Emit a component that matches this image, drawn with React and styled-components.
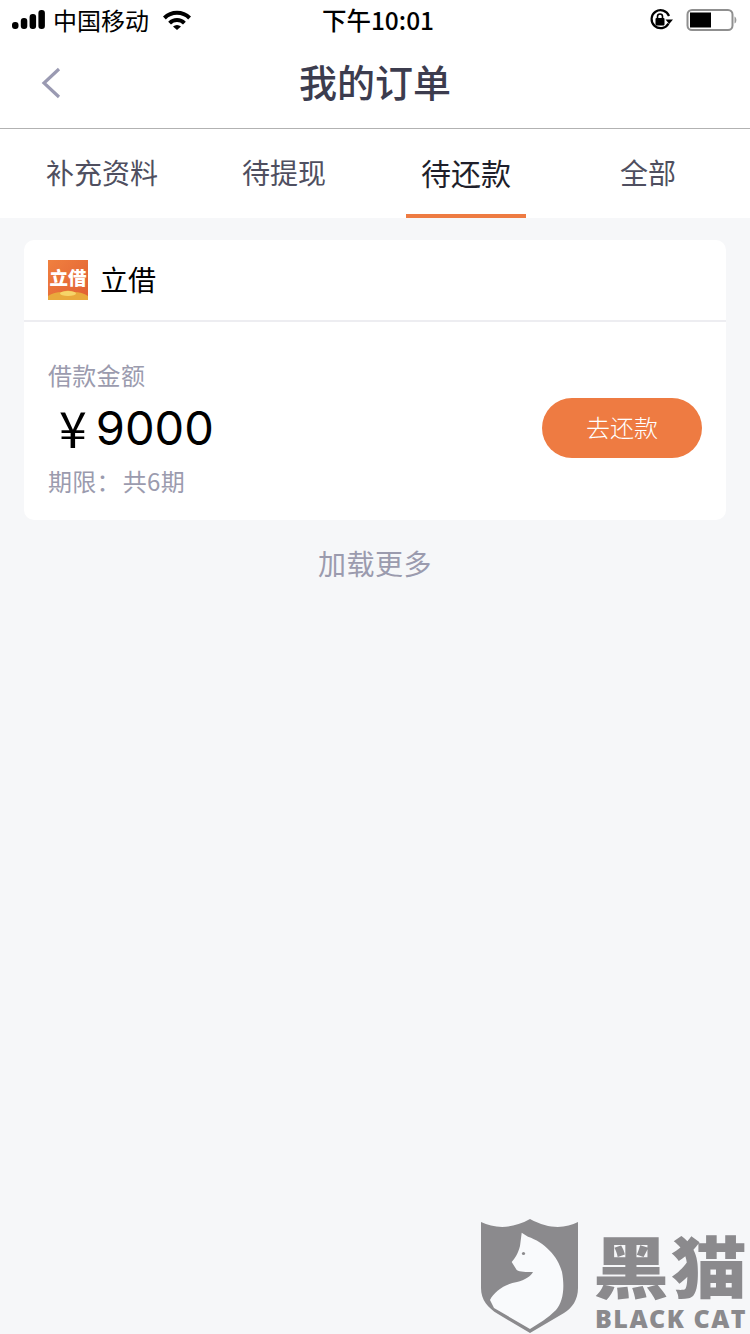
import React from "react";
import styled, { createGlobalStyle } from "styled-components";

const CJK = `"Noto Sans CJK SC", "Noto Sans", sans-serif`;
const LATIN = `"Liberation Sans", "Noto Sans CJK SC", sans-serif`;

const Global = createGlobalStyle`
  html, body { margin: 0; padding: 0; background: #f6f7f9; }
  * { box-sizing: border-box; }
`;

const Page = styled.div`
  position: relative;
  width: 750px;
  height: 1334px;
  overflow: hidden;
  background: #f6f7f9;
  font-family: ${CJK};
  display: flex;
  flex-direction: column;
`;

const StatusBar = styled.div`
  height: 40px;
  background: #fff;
  display: grid;
  grid-template-columns: 1fr auto 1fr;
  align-items: center;
  padding: 0 12px;
  color: #000;
`;
const StatusLeft = styled.div`
  display: flex;
  align-items: center;
  gap: 8px;
`;
const Carrier = styled.span`
  font-size: 24px;
  line-height: 40px;
  margin-right: 6px;
`;
const Clock = styled.span`
  font-size: 24.5px;
  line-height: 40px;
  margin-left: 6px;
  font-weight: 500;
`;
const StatusRight = styled.div`
  display: flex;
  justify-content: flex-end;
  align-items: center;
  gap: 13px;
`;

const NavBar = styled.div`
  height: 89px;
  background: #fff;
  border-bottom: 1px solid #b2b2b2;
  display: flex;
  align-items: center;
  justify-content: center;
  position: relative;
  padding-bottom: 7px;
`;
const BackButton = styled.span`
  position: absolute;
  left: 40px;
  top: 26px;
  display: flex;
`;
const Title = styled.h1`
  margin: 0;
  font-size: 38px;
  line-height: 50px;
  font-weight: 500;
  color: #3c3c4e;
`;

const Tabs = styled.div`
  height: 89px;
  background: #fff;
  padding: 0 11px;
  display: grid;
  grid-template-columns: repeat(4, 1fr);
`;
const Tab = styled.div`
  position: relative;
  display: flex;
  align-items: center;
  justify-content: center;
  padding-bottom: 3px;
  font-size: ${(p) => (p.$active ? "30px" : "28px")};
  color: ${(p) => (p.$active ? "#1f1f2b" : "#4f4f60")};
  &::after {
    content: "";
    display: ${(p) => (p.$active ? "block" : "none")};
    position: absolute;
    left: 31px;
    right: 31px;
    bottom: 0;
    height: 4px;
    background: #ee7b42;
  }
`;

const Content = styled.div`
  flex: 1;
  padding: 22px 24px 0;
  display: flex;
  flex-direction: column;
`;
const Card = styled.div`
  background: #fff;
  border-radius: 10px;
  height: 280px;
  display: flex;
  flex-direction: column;
`;
const CardHeader = styled.div`
  height: 82px;
  padding: 0 24px;
  border-bottom: 2px solid #ededf1;
  display: flex;
  align-items: center;
  gap: 13px;
`;
const Brand = styled.span`
  font-size: 28px;
  color: #000;
  margin: -2px 0 0 -1px;
`;
const CardBody = styled.div`
  flex: 1;
  display: flex;
  align-items: center;
  justify-content: space-between;
  padding: 14px 24px 0 24px;
`;
const Info = styled.div`
  display: flex;
  flex-direction: column;
`;
const Label = styled.span`
  font-size: 24px;
  line-height: 34px;
  letter-spacing: 0.3px;
  color: #9b9bae;
`;
const Amount = styled.span`
  display: flex;
  align-items: center;
  font-family: "Inter", ${LATIN};
  font-size: 47px;
  line-height: 72px;
  color: #000;
  padding-left: 11px;
`;
const Yen = styled.span`
  font-family: ${CJK};
  font-size: 50px;
  line-height: 68px;
  margin: 0 9px 4px 0;
`;
const PayButton = styled.button`
  width: 160px;
  height: 60px;
  border: 0;
  border-radius: 30px;
  background: #ee7b42;
  color: #fff;
  font-family: ${CJK};
  font-size: 24px;
  font-weight: 300;
  padding: 0 0 3px;
`;
const LoadMore = styled.div`
  margin-top: 21px;
  text-align: center;
  font-size: 28px;
  line-height: 44px;
  letter-spacing: 0.5px;
  color: #9b9bae;
`;

const Watermark = styled.div`
  position: absolute;
  left: 480px;
  top: 1218px;
  display: flex;
  gap: 13px;
`;
const WatermarkText = styled.div`
  display: flex;
  flex-direction: column;
  color: #8b8a8d;
  white-space: nowrap;
`;
const WatermarkCn = styled.span`
  font-size: 76px;
  line-height: 66px;
  margin-top: 13px;
  font-weight: 900;
  letter-spacing: 2px;
  transform: scaleY(0.88);
`;
const WatermarkEn = styled.span`
  font-family: "Open Sans", ${LATIN};
  font-weight: 800;
  font-size: 25px;
  line-height: 30px;
  margin-top: 6px;
  padding-left: 2px;
  letter-spacing: 1.5px;
`;

const Signal = () => (
  <svg width="33" height="20" viewBox="0 0 33 20">
    <rect x="0" y="12" width="6.5" height="7" rx="3" fill="#000" />
    <rect x="8.8" y="8" width="6.5" height="11" rx="3" fill="#000" />
    <rect x="17.6" y="4" width="6.5" height="15" rx="3" fill="#000" />
    <rect x="26.4" y="0" width="6.5" height="19" rx="3" fill="#000" />
  </svg>
);
const Wifi = () => (
  <svg width="28" height="20" viewBox="0 0 28 20">
    <path d="M0 6.5 A20 20 0 0 1 28 6.5 L25.2 9.4 A16 16 0 0 0 2.8 9.4 Z" fill="#000" />
    <path d="M5.2 11.7 A12.5 12.5 0 0 1 22.8 11.7 L20 14.5 A8.5 8.5 0 0 0 8 14.5 Z" fill="#000" />
    <path d="M10 16.5 A6 6 0 0 1 18 16.5 L14 20 Z" fill="#000" />
  </svg>
);
const RotationLock = () => (
  <svg width="24" height="24" viewBox="0 0 24 24">
    <path d="M19.5 15.5 A9 9 0 1 1 20 8" fill="none" stroke="#000" strokeWidth="2.2" />
    <path d="M16.5 11.5 L24 11.5 L20.2 16 Z" fill="#000" />
    <rect x="6.5" y="10" width="9" height="7.5" rx="1" fill="#000" />
    <path d="M8.5 10.5 V8.5 a2.5 2.5 0 0 1 5 0 V10.5" fill="none" stroke="#000" strokeWidth="1.6" />
  </svg>
);
const Battery = () => (
  <svg width="52" height="24" viewBox="0 0 52 24">
    <rect x="1.5" y="2" width="45" height="20" rx="4.5" fill="#fff" stroke="#8f8f8f" strokeWidth="2" />
    <rect x="4" y="4.5" width="21" height="15" fill="#000" />
    <path d="M48.5 8.5 C51 9.5 51 14.5 48.5 15.5 Z" fill="#9a9a9a" />
  </svg>
);
const Chevron = () => (
  <svg width="22" height="34" viewBox="0 0 22 34">
    <path d="M19 3 L4 17 L19 31" fill="none" stroke="#9a9ab2" strokeWidth="3.2" />
  </svg>
);
const LiJieLogo = () => (
  <svg width="40" height="40" viewBox="0 0 40 40">
    <defs>
      <linearGradient id="lj" x1="0" y1="0" x2="1" y2="1">
        <stop offset="0" stopColor="#f0803f" />
        <stop offset="1" stopColor="#e05f33" />
      </linearGradient>
    </defs>
    <rect width="40" height="40" fill="url(#lj)" />
    <path d="M0 40 V36 Q6 32 14 32 Q20 29 26 32 Q34 32 40 36 V40 Z" fill="#e9a93c" />
    <ellipse cx="20" cy="33.5" rx="8" ry="2.6" fill="#f6d469" />
    <text x="20" y="25" textAnchor="middle" fontSize="18.5" fontWeight="900" fill="#fff" fontFamily={CJK}>立借</text>
  </svg>
);
const Shield = () => (
  <svg width="100" height="116" viewBox="0 0 100 116">
    <path d="M1 4 C14 10 30 12 50 1 C70 12 86 10 98 4 L98 70 C98 82 92 90 84 95 L50 115 L18 96 C8 90 1 82 1 70 Z" fill="#8b8a8d" />
    <path d="M41.7 14.7 L48 18.7 C64 24 78 38 82 54 C85 70 83 84 76 92 C68 100 58 106 50 111 L14 90 L10 82 C14 74 24 66 37 64 C45 62 51 58 53 54 C46 54 40 54 36.7 52 L31.7 44 C35 40 38 36 40 28 Z" fill="#f9fafc" />
    <circle cx="43.5" cy="35.5" r="1.6" fill="#8b8a8d" />
  </svg>
);

const tabs = ["补充资料", "待提现", "待还款", "全部"];

export default function App() {
  return (
    <Page>
      <Global />
      <StatusBar>
        <StatusLeft>
          <Signal />
          <Carrier>中国移动</Carrier>
          <Wifi />
        </StatusLeft>
        <Clock>下午10:01</Clock>
        <StatusRight>
          <RotationLock />
          <Battery />
        </StatusRight>
      </StatusBar>
      <NavBar>
        <BackButton><Chevron /></BackButton>
        <Title>我的订单</Title>
      </NavBar>
      <Tabs>
        {tabs.map((t) => (
          <Tab key={t} $active={t === "待还款"}>{t}</Tab>
        ))}
      </Tabs>
      <Content>
        <Card>
          <CardHeader>
            <LiJieLogo />
            <Brand>立借</Brand>
          </CardHeader>
          <CardBody>
            <Info>
              <Label>借款金额</Label>
              <Amount><Yen>¥</Yen>9000</Amount>
              <Label>期限：{"\u200A"}共6期</Label>
            </Info>
            <PayButton>去还款</PayButton>
          </CardBody>
        </Card>
        <LoadMore>加载更多</LoadMore>
      </Content>
      <Watermark>
        <Shield />
        <WatermarkText>
          <WatermarkCn>黑猫</WatermarkCn>
          <WatermarkEn>BLACK CAT</WatermarkEn>
        </WatermarkText>
      </Watermark>
    </Page>
  );
}
